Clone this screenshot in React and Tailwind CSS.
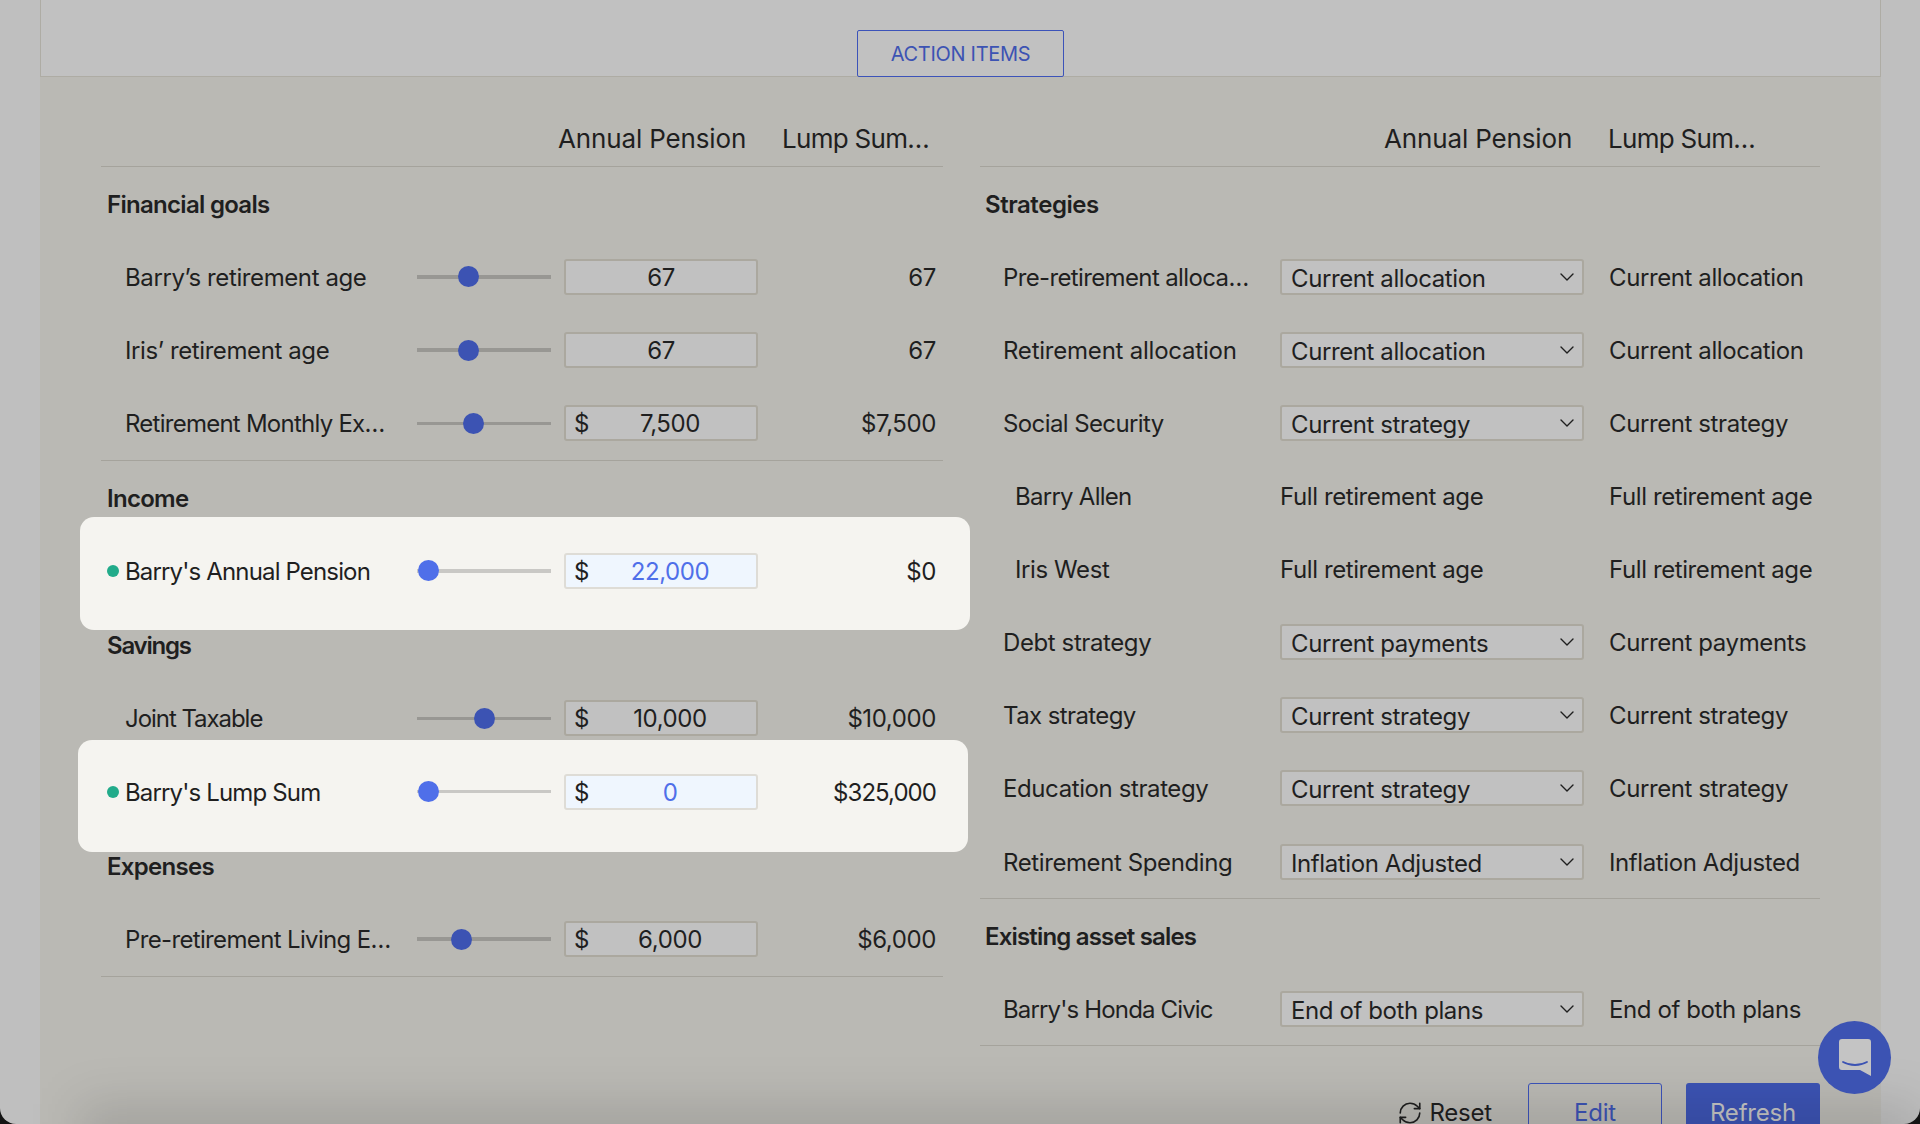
import React from 'react';
import { ChevronDown, RefreshCw } from 'lucide-react';

const leftSections = [
  {
    title: 'Financial goals',
    rows: [
      { label: 'Barry’s retirement age', thumb: 51, value: '67', result: '67' },
      { label: 'Iris’ retirement age', thumb: 51, value: '67', result: '67' },
      { label: 'Retirement Monthly Ex…', tight: 'tracking-[-0.75px]', thumb: 56, value: '7,500', money: true, result: '$7,500' },
    ],
  },
  {
    title: 'Income',
    rows: [
      { label: "Barry's Annual Pension", tight: 'tracking-[-0.85px]', thumb: 11, value: '22,000', money: true, result: '$0', hot: 'income' },
    ],
  },
  {
    title: 'Savings',
    tight: 'tracking-[-1.2px]',
    rows: [
      { label: 'Joint Taxable', tight: 'tracking-[-1.05px]', thumb: 67, value: '10,000', money: true, result: '$10,000' },
      { label: "Barry's Lump Sum", tight: 'tracking-[-0.85px]', thumb: 11, value: '0', money: true, result: '$325,000', hot: 'lump' },
    ],
  },
  {
    title: 'Expenses',
    rows: [
      { label: 'Pre-retirement Living E…', tight: 'tracking-[-0.65px]', thumb: 44, value: '6,000', money: true, result: '$6,000' },
    ],
  },
];

const rightSections = [
  {
    title: 'Strategies',
    tight: 'tracking-[-0.45px]',
    rows: [
      { label: 'Pre-retirement alloca…', tight: 'tracking-[-0.63px]', select: 'Current allocation', result: 'Current allocation' },
      { label: 'Retirement allocation', tight: 'tracking-[-0.22px]', select: 'Current allocation', result: 'Current allocation' },
      { label: 'Social Security', tight: 'tracking-[-0.6px]', select: 'Current strategy', result: 'Current strategy' },
      { label: 'Barry Allen', tight: 'tracking-[-0.73px]', plain: 'Full retirement age', result: 'Full retirement age', sub: true },
      { label: 'Iris West', plain: 'Full retirement age', result: 'Full retirement age', sub: true },
      { label: 'Debt strategy', select: 'Current payments', result: 'Current payments' },
      { label: 'Tax strategy', tight: 'tracking-[-0.6px]', select: 'Current strategy', result: 'Current strategy' },
      { label: 'Education strategy', select: 'Current strategy', result: 'Current strategy' },
      { label: 'Retirement Spending', select: 'Inflation Adjusted', result: 'Inflation Adjusted' },
    ],
  },
  {
    title: 'Existing asset sales',
    tight: 'tracking-[-0.82px]',
    rows: [
      { label: "Barry's Honda Civic", tight: 'tracking-[-0.85px]', select: 'End of both plans', result: 'End of both plans' },
    ],
  },
];

const ColumnHeader = ({ offset }) => (
  <div className={`flex items-center h-[90px] pt-[33px] border-b border-[#a5a39c] text-[26px] tracking-[-0.15px] text-[#1f1f1f] ${offset}`}>
    <span className="w-[224px]">Annual Pension</span>
    <span className="tracking-[-0.7px]">Lump Sum…</span>
  </div>
);

const SectionTitle = ({ children, left, tight }) => (
  <div className={`flex items-center h-[73.25px] pt-[2px] text-[24px] font-semibold text-[#1f1f1f] ${left} ${tight || 'tracking-[-0.7px]'}`}>{children}</div>
);

const Slider = ({ thumb, hot }) => (
  <div className="relative flex items-center w-[134px] h-[22px] shrink-0">
    <div className={`w-full h-[3.5px] ${hot ? 'bg-[#c9c8c5]' : 'bg-[#989793]'}`} />
    <div
      className={`absolute w-[21px] h-[21px] -ml-[10px] rounded-full ${hot ? 'bg-[#4f6fe9]' : 'bg-[#3c53b3]'}`}
      style={{ left: thumb }}
    />
  </div>
);

const ValueInput = ({ value, money, hot }) => (
  <div
    className={`relative flex items-center justify-center ml-[13px] w-[194px] h-[36px] pt-[2px] border-2 rounded-[3px] shrink-0 ${
      hot ? 'bg-[#eff6fe] border-[#dedcd6] text-[#4f6fe9]' : 'bg-[#c1c1c1] border-[#aba89f]'
    }`}
  >
    {money && <span className="absolute left-[8px] text-[#1f1f1f]">$</span>}
    <span className={money ? 'pl-[18px]' : ''}>{value}</span>
  </div>
);

const LeftRow = ({ row }) => {
  const hot = !!row.hot;
  return (
    <div className="relative flex items-center h-[73.25px] text-[24px] tracking-[-0.4px] text-[#1f1f1f]">
      {row.hot === 'income' && (
        <div className="absolute -left-[21px] -right-[27px] -top-[17px] -bottom-[22px] rounded-[14px] bg-[#f5f4f0]" />
      )}
      {row.hot === 'lump' && (
        <div className="absolute -left-[23px] -right-[25px] -top-[15px] -bottom-[24px] rounded-[14px] bg-[#f5f4f0]" />
      )}
      <div className="relative flex items-center w-full">
        <div className="flex items-center w-[316px] shrink-0 pl-[6px]">
          {hot ? <span className="w-[12px] h-[12px] mr-[6px] rounded-full bg-[#21ab8a]" /> : <span className="w-[18px]" />}
          <span className={`pt-[2px] whitespace-nowrap ${row.tight || ''}`}>{row.label}</span>
        </div>
        <Slider thumb={row.thumb} hot={hot} />
        <ValueInput value={row.value} money={row.money} hot={hot} />
        <div className={`flex-1 pt-[2px] pr-[7px] text-right whitespace-nowrap ${row.hot === 'lump' ? 'tracking-[-0.95px]' : ''}`}>{row.result}</div>
      </div>
    </div>
  );
};

const RightRow = ({ row }) => (
  <div className="flex items-center h-[73.1px] text-[24px] tracking-[-0.4px] text-[#1f1f1f]">
    <div className={`w-[300px] shrink-0 pt-[2px] whitespace-nowrap ${row.sub ? 'pl-[35px]' : 'pl-[23px]'} ${row.tight || ''}`}>{row.label}</div>
    {row.select ? (
      <div className="flex items-center justify-between w-[304px] h-[36px] shrink-0 pl-[9px] pr-[3px] border-2 border-[#aba89f] rounded-[3px] bg-[#c1c1c1]">
        <span className="pt-[4px] whitespace-nowrap">{row.select}</span>
        <ChevronDown size={24} strokeWidth={1.4} />
      </div>
    ) : (
      <div className="w-[304px] shrink-0 pt-[2px] whitespace-nowrap">{row.plain}</div>
    )}
    <div className="pl-[25px] pt-[2px] whitespace-nowrap">{row.result}</div>
  </div>
);

export default function App() {
  return (
    <div className="relative w-[1920px] h-[1124px] overflow-hidden bg-[#141414] font-['Inter',sans-serif]">
      <div className="relative w-full h-full overflow-hidden rounded-b-[16px] bg-[#bfbfbf]">
        {/* top panel */}
        <div className="flex justify-center items-end ml-[40px] w-[1841px] h-[77px] border-x border-b border-[#aeaca4] bg-[#c1c1c1]">
          <button className="flex items-center justify-center w-[207px] h-[47px] -mb-px border-[1.5px] border-[#3c53b9] rounded-[2px] text-[20px] tracking-[-0.3px] text-[#3c53b3]">
            ACTION ITEMS
          </button>
        </div>

        {/* main panel */}
        <div className="flex gap-[37px] ml-[40px] w-[1841px] h-[1047px] pl-[61px] bg-[#bab9b4]">
          <div className="w-[842px] shrink-0">
            <ColumnHeader offset="pl-[457px]" />
            {leftSections.map((section) => (
              <div key={section.title} className="border-b border-[#a5a39c]">
                <SectionTitle left="pl-[6px]" tight={section.tight}>{section.title}</SectionTitle>
                {section.rows.map((row) => (
                  <LeftRow key={row.label} row={row} />
                ))}
              </div>
            ))}
          </div>

          <div className="w-[840px] shrink-0">
            <ColumnHeader offset="pl-[404px]" />
            {rightSections.map((section) => (
              <div key={section.title} className="border-b border-[#a5a39c]">
                <SectionTitle left="pl-[5px]" tight={section.tight}>{section.title}</SectionTitle>
                {section.rows.map((row) => (
                  <RightRow key={row.label} row={row} />
                ))}
              </div>
            ))}

            {/* footer buttons */}
            <div className="flex items-start justify-end mt-[37px] text-[24px] leading-[20px] tracking-[-0.2px]">
              <div className="flex items-center mt-[17px] text-[#1f1f1f]">
                <RefreshCw size={26} strokeWidth={1.5} className="mr-[6px]" />
                Reset
              </div>
              <button className="w-[134px] h-[60px] ml-[36px] border-[1.5px] border-[#3c53b9] rounded-[3px] text-[#3c53b3]">Edit</button>
              <button className="w-[134px] h-[60px] ml-[24px] rounded-[3px] bg-[#3c53b3] text-[#c4c4c4]">Refresh</button>
            </div>
          </div>
        </div>

        {/* bottom fade */}
        <div className="absolute left-[80px] right-0 -bottom-[40px] h-[60px] bg-[#0000001f] blur-xl pointer-events-none" />

        {/* chat bubble */}
        <div className="absolute left-[1818px] top-[1021px] flex items-center justify-center w-[73px] h-[73px] rounded-full bg-[#3c53b3]">
          <svg width="32" height="37" viewBox="0 0 32 37">
            <path d="M3 0h26a3 3 0 0 1 3 3v34l-11-6H3a3 3 0 0 1-3-3V3a3 3 0 0 1 3-3z" fill="#c4c4c4" />
            <path d="M4 23c7 4 17 4 24 0" fill="none" stroke="#3c53b3" strokeWidth="1.8" strokeLinecap="round" />
          </svg>
        </div>
      </div>
    </div>
  );
}
